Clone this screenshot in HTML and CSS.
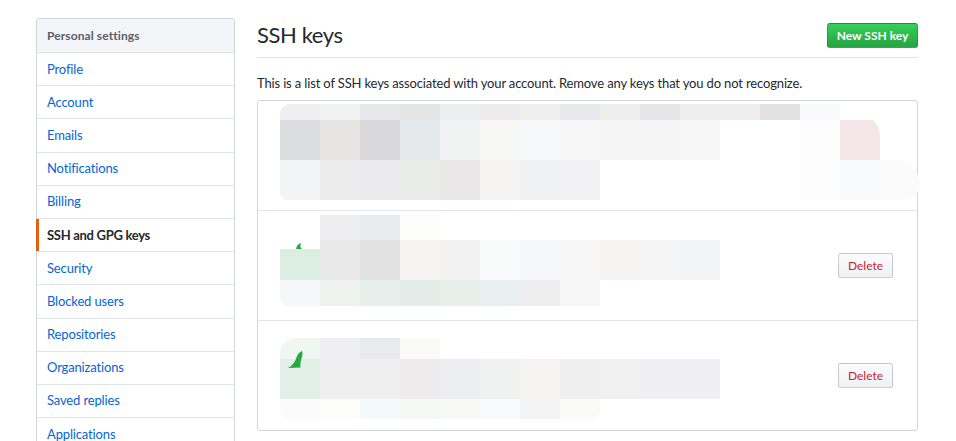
FILE: index.html
```html
<!DOCTYPE html>
<html lang="en">
<head>
<meta charset="utf-8">
<title>SSH keys</title>
<link rel="stylesheet" href="styles.css">
</head>
<body>
<div class="page">
  <nav class="menu">
    <div class="menu-heading">Personal settings</div>
    <a class="menu-item" href="#">Profile</a>
    <a class="menu-item" href="#">Account</a>
    <a class="menu-item" href="#">Emails</a>
    <a class="menu-item" href="#">Notifications</a>
    <a class="menu-item" href="#">Billing</a>
    <a class="menu-item selected" href="#">SSH and GPG keys</a>
    <a class="menu-item" href="#">Security</a>
    <a class="menu-item" href="#">Blocked users</a>
    <a class="menu-item" href="#">Repositories</a>
    <a class="menu-item" href="#">Organizations</a>
    <a class="menu-item" href="#">Saved replies</a>
    <a class="menu-item" href="#">Applications</a>
  </nav>
  <main class="content">
    <div class="subhead">
      <h2 class="subhead-title">SSH keys</h2>
      <button class="btn btn-primary">New SSH key</button>
    </div>
    <p class="desc">This is a list of SSH keys associated with your account. Remove any keys that you do not recognize.</p>
    <div class="keys">
      <div class="key">
        <div class="mosaic mosaic-1">
          <div class="band b16">
            <i class="tl" style="background:#f0eeef"></i><i style="background:#f1f2f4"></i><i style="background:#e6e7e9"></i><i style="background:#e4e5e7"></i><i style="background:#edeef0"></i><i style="background:#eeebec"></i><i style="background:#efefed"></i><i style="background:#e8e9eb"></i><i style="background:#edeeea"></i><i style="background:#e6e6e8"></i><i style="background:#ededed"></i><i style="background:#f0eceb"></i><i style="background:#e1e1e1"></i><i style="background:#f9fafc"></i>
          </div>
          <div class="band b40">
            <i style="background:#dcdde0"></i><i style="background:#e6e5e3"></i><i style="background:#d8d8db"></i><i style="background:#e5e8eb"></i><i style="background:#f1f2f2"></i><i style="background:#f7f7f6"></i><i style="background:#f7f8fa"></i><i style="background:#f6f6f6"></i><i style="background:#f4f5f4"></i><i style="background:#f4f5f4"></i><i style="background:#f6f6f6"></i><i></i><i></i><i style="background:#fcfcfc"></i><i class="tr" style="background:#f3e6e9"></i>
          </div>
          <div class="band b40">
            <i class="bl" style="background:#f3f4f6"></i><i style="background:#ececec"></i><i style="background:#eaeaec"></i><i style="background:#e9ebe9"></i><i style="background:#e9e7e7"></i><i style="background:#f4f3f1"></i><i style="background:#f0f1f3"></i><i style="background:#f2f2f4"></i><i></i><i></i><i></i><i></i><i></i><i style="background:#fcfcfc"></i><i style="background:#f8f9fb"></i><i class="blob" style="background:#fbfbfb"></i>
          </div>
        </div>
      </div>
      <div class="key">
        <div class="mosaic mosaic-2">
          <div class="band b25">
            <i></i><i style="background:#ededef"></i><i style="background:#e9eaec"></i><i style="background:#fcfcfb"></i>
          </div>
          <div class="band b40">
            <i class="leaf-cell">
              <svg class="leaf-small" width="7" height="6" viewBox="0 0 7 6"><path d="M5 0C2.5 0.8 0.5 2.6 0 6L6.5 6C4.2 5.2 3.8 3.2 5 0Z" fill="#28a745"/></svg>
            </i><i style="background:#e9e9ea"></i><i style="background:#e2e2e2"></i><i style="background:#f4f3f2"></i><i style="background:#f2f2f2"></i><i style="background:#f8f9f9"></i><i style="background:#f5f6f8"></i><i style="background:#f6f6f6"></i><i style="background:#f5f4f3"></i><i style="background:#f6f5f5"></i><i style="background:#f3f4f6"></i>
          </div>
          <div class="band b26">
            <i class="bl" style="background:#f6f7f9"></i><i style="background:#edf2ef"></i><i style="background:#e6efec"></i><i style="background:#e3ece8"></i><i style="background:#e8efea"></i><i style="background:#e8efef"></i><i style="background:#eeeeee"></i><i style="background:#f6f6f6"></i>
          </div>
        </div>
        <button class="btn btn-danger">Delete</button>
      </div>
      <div class="key">
        <div class="mosaic mosaic-3">
          <div class="band b21">
            <i class="tl-big" style="background:#f0f7f2"></i><i style="background:#efeff1"></i><i style="background:#e9eaec"></i><i style="background:#fafaf9"></i>
          </div>
          <div class="band b40">
            <i style="background:#e2efe6">
              <svg class="leaf" width="16" height="17" viewBox="0 0 16 17"><path d="M14 0C10 1.5 9.2 5 7.5 9C6 12.5 3.5 15 0 17L12.5 16.5C12 13 12.8 10 13.8 6.5C14.6 3.8 14.8 1.6 14 0Z" fill="#28a745"/></svg>
            </i><i style="background:#efeff0"></i><i style="background:#efeff0"></i><i style="background:#edebec"></i><i style="background:#edeef0"></i><i style="background:#f0f1f1"></i><i style="background:#f4f3f2"></i><i style="background:#efeff0"></i><i style="background:#f0f0f1"></i><i style="background:#efeff1"></i><i style="background:#efeff1"></i>
          </div>
          <div class="band b20">
            <i class="bl" style="background:#fbfbfb"></i><i style="background:#fcfdf8"></i><i style="background:#f4f9f9"></i><i style="background:#f6f8f6"></i><i style="background:#f8f8f7"></i><i style="background:#f7fafb"></i><i style="background:#f3f3f3"></i><i class="br" style="background:#fafaf8"></i>
          </div>
        </div>
        <button class="btn btn-danger">Delete</button>
      </div>
    </div>
  </main>
</div>
</body>
</html>
```
FILE: styles.css
```css
* { box-sizing: border-box; }

body {
  margin: 0;
  background: #fff;
  color: #24292e;
  font-family: Lato, "Liberation Sans", sans-serif;
  font-size: 13px;
  letter-spacing: -0.15px;
}

.page {
  display: flex;
  align-items: flex-start;
  gap: 22px;
  padding: 18px 0 0 36px;
}

/* ---------- sidebar menu ---------- */
.menu {
  flex: none;
  width: 199px;
  border: 1px solid #d1d5da;
  border-radius: 3px;
  background: #fff;
}

.menu-heading {
  display: flex;
  align-items: center;
  height: 34px;
  padding: 0 10px;
  background: #f3f5f8;
  border-bottom: 1px solid #e1e4e8;
  border-radius: 3px 3px 0 0;
  color: #586069;
  font-size: 12px;
  font-weight: 700;
  letter-spacing: 0.1px;
}

.menu-item {
  position: relative;
  display: flex;
  align-items: center;
  height: 33.2px;
  padding: 0 10px 1px;
  border-bottom: 1px solid #e1e4e8;
  color: #0366d6;
  text-decoration: none;
}

.menu-item.selected {
  color: #24292e;
  font-weight: 700;
  letter-spacing: -0.3px;
}

.menu-item.selected::before {
  content: "";
  position: absolute;
  left: -1px;
  top: 0;
  bottom: 0;
  width: 3px;
  background: #e36209;
}

/* ---------- main content ---------- */
.content {
  flex: none;
  width: 661px;
}

.subhead {
  display: flex;
  align-items: center;
  justify-content: space-between;
  height: 40px;
  padding-bottom: 5px;
  border-bottom: 1px solid #e1e4e8;
}

.subhead-title {
  margin: 0;
  font-size: 22px;
  font-weight: 400;
  line-height: 30px;
  letter-spacing: -0.4px;
}

.btn {
  height: 25px;
  padding: 0;
  border: 1px solid rgba(27, 31, 35, 0.2);
  border-radius: 3px;
  font-family: inherit;
  font-size: 12px;
  line-height: 23px;
  letter-spacing: 0;
  white-space: nowrap;
  text-align: center;
  cursor: pointer;
}

.btn-primary {
  width: 91px;
  color: #fff;
  font-weight: 700;
  background: linear-gradient(#34d058, #28a745 90%);
}

.btn-danger {
  flex: none;
  width: 55px;
  margin-left: auto;
  color: #cb2431;
  background: linear-gradient(#fafbfc, #eff3f6 90%);
}

.desc {
  margin: 15px 0 7px;
  line-height: 20px;
}

.keys {
  border: 1px solid #d1d5da;
  border-radius: 3px;
}

.key {
  display: flex;
  align-items: center;
  height: 110px;
  padding: 0 24px 0 22px;
  border-top: 1px solid #e1e4e8;
}

.key:first-child {
  border-top: 0;
  height: 109px;
}

/* ---------- pixelated (redacted) key details ---------- */
.mosaic {
  flex: none;
  align-self: flex-start;
  display: flex;
  flex-direction: column;
}

.mosaic-1 { margin-top: 3px; }
.mosaic-2 { margin-top: 4px; }
.mosaic-3 { margin-top: 17px; }

.band { display: flex; }
.band > i { flex: none; display: block; width: 40px; }

.b16 > i { height: 16px; }
.b20 > i { height: 20px; }
.b21 > i { height: 21px; }
.b25 > i { height: 25px; }
.b26 > i { height: 26px; }
.b40 > i { height: 40px; }

.band > .tl { border-top-left-radius: 10px; }
.band > .tl-big { border-top-left-radius: 16px; }
.band > .tr { border-top-right-radius: 10px 18px; }
.band > .bl { border-bottom-left-radius: 8px; }
.band > .br { border-bottom-right-radius: 10px; }
.band > .blob { border-radius: 0 30px 30px 0 / 0 40px 20px 0; }

.band > .leaf-cell {
  background: linear-gradient(#fff 9px, #dcede2 9px);
}

.leaf-small {
  display: block;
  margin: 3px 0 0 16px;
}

.leaf {
  display: block;
  margin: -8px 0 0 8px;
}
```
